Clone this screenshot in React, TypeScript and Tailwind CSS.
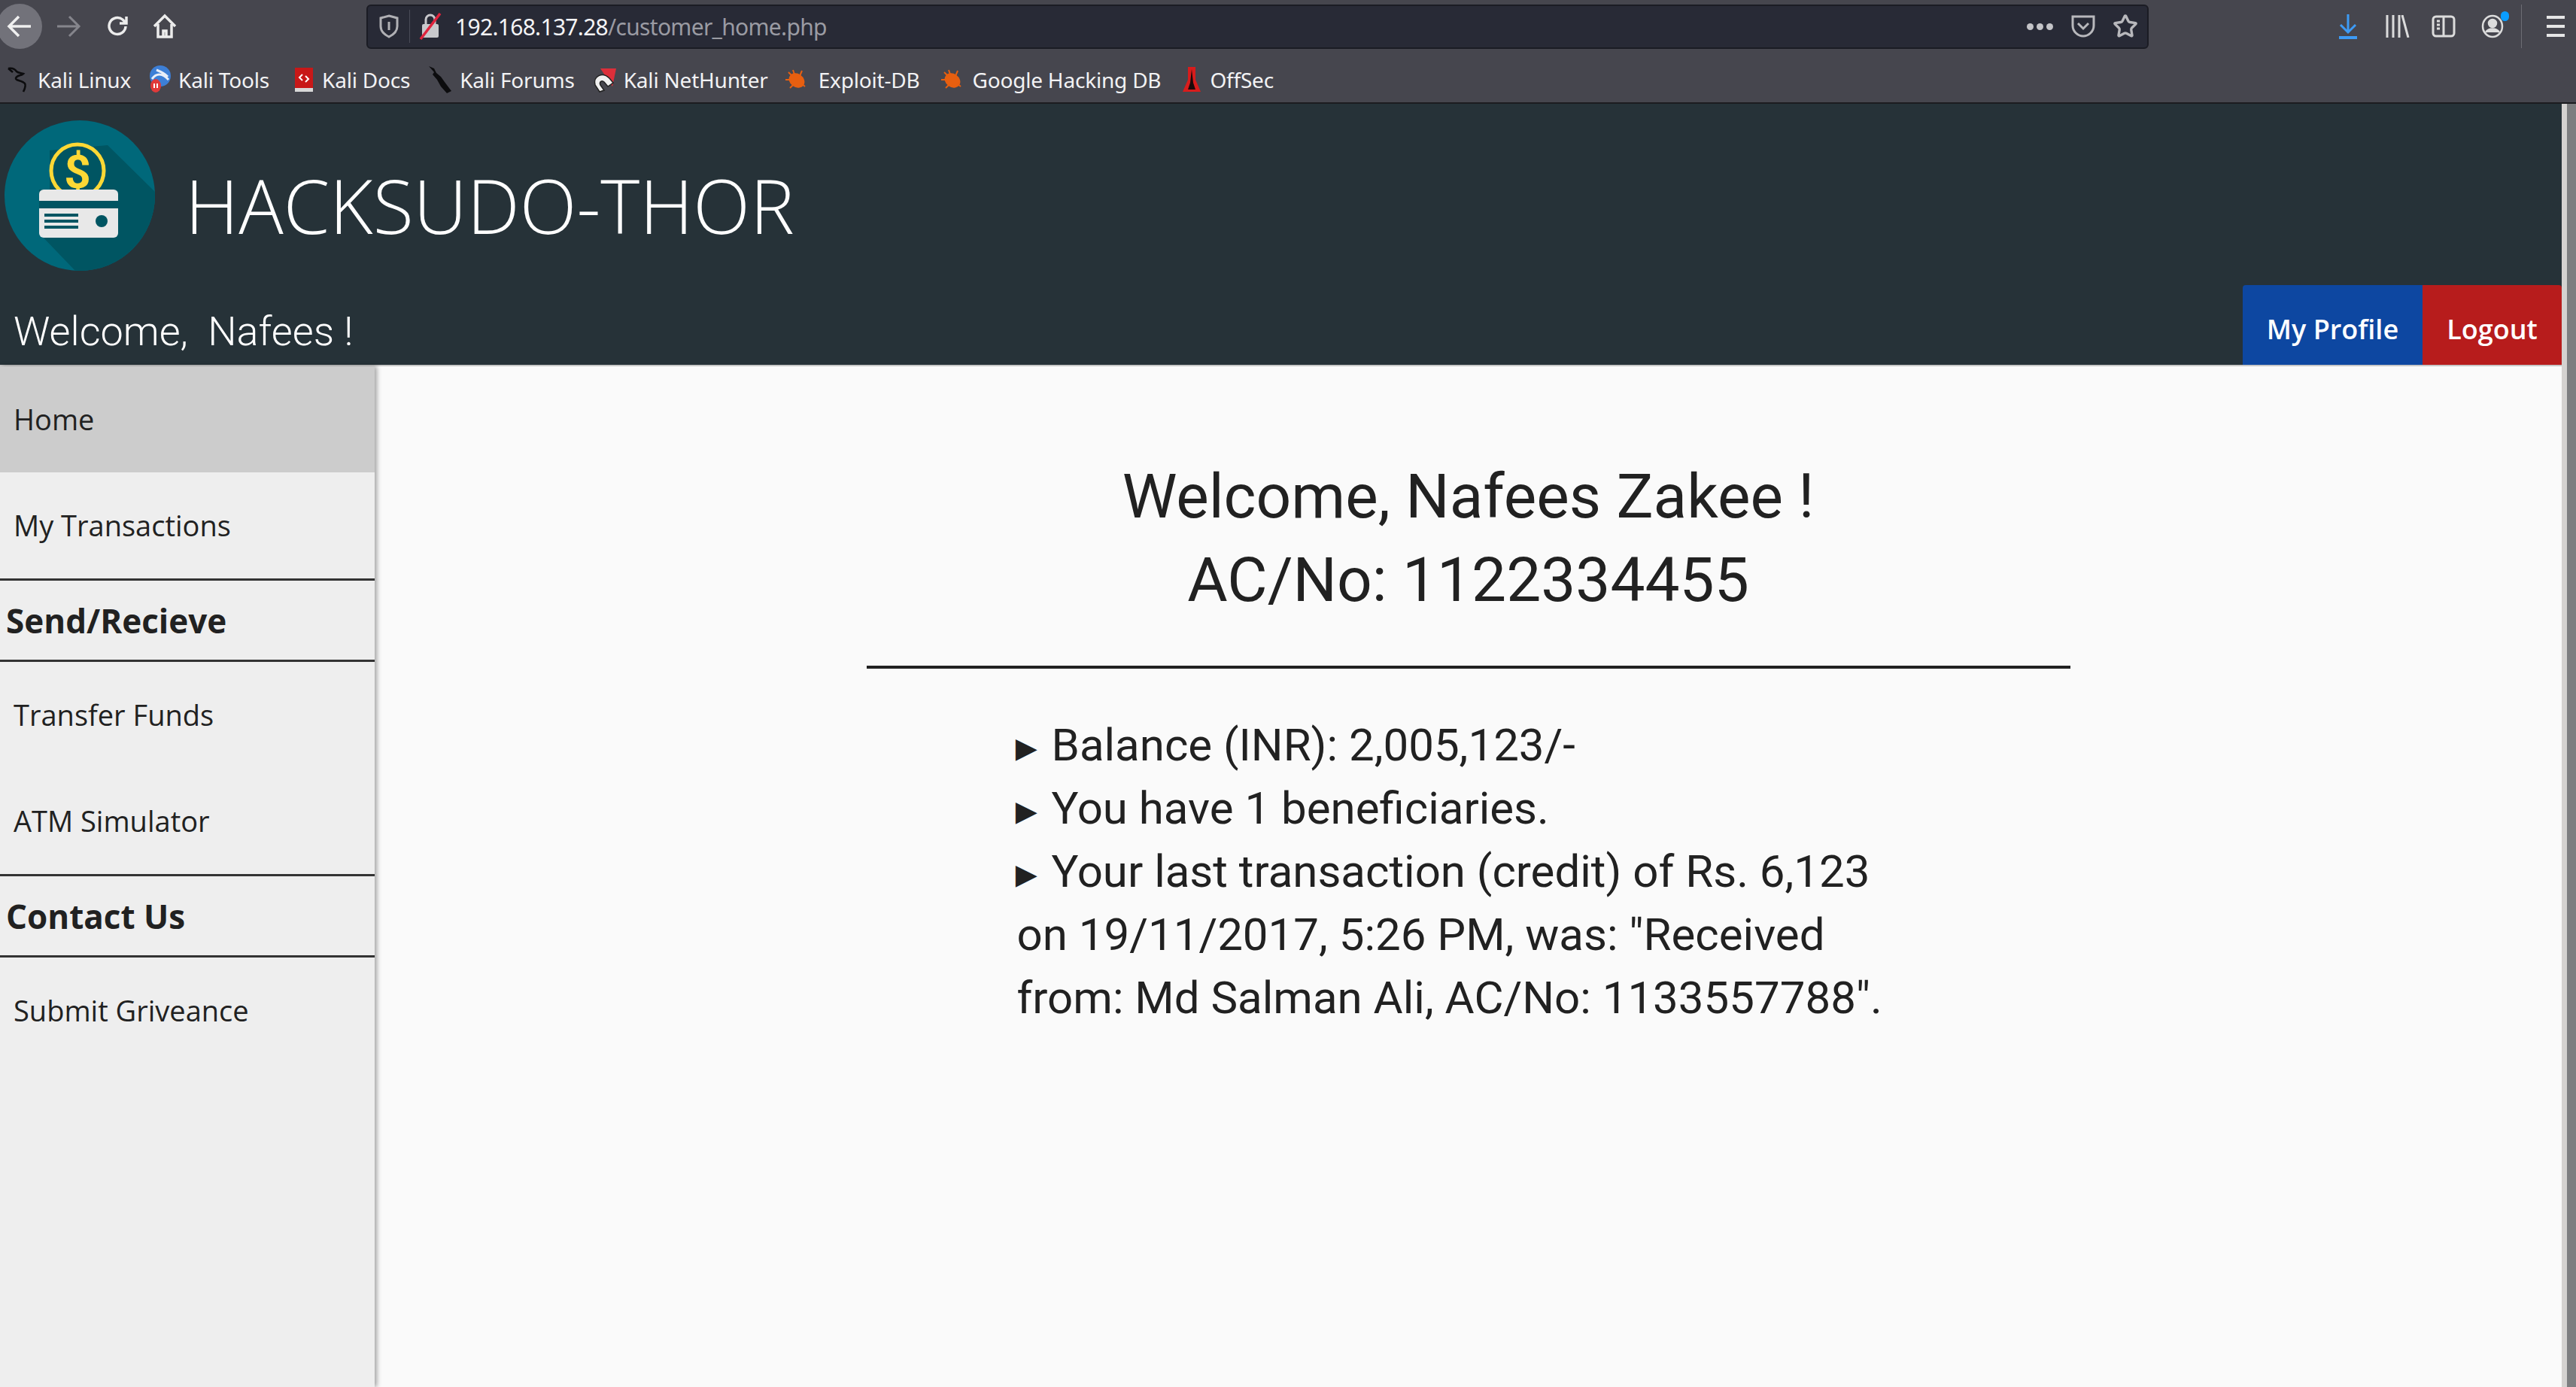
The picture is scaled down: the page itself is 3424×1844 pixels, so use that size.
import { Star } from "lucide-react";

const chromeFont = "font-['Noto_Sans',sans-serif]";

function DragonIcon() {
  return (
    <svg width="30" height="36" viewBox="0 0 30 36" fill="none" stroke="#0c0c0e" strokeWidth="2.6">
      <path d="M1 3c5-1 9 1 11 4 2 2 6 2 9 3-3 3-9 2-10 6-1 3 9 3 12 7 2 3 0 7-2 11" />
      <path d="M1 3l6 5" />
    </svg>
  );
}

function ToolsIcon() {
  return (
    <svg width="30" height="38" viewBox="0 0 30 38">
      <circle cx="15" cy="14" r="14" fill="#3d7fd6" />
      <path d="M4 18c6-8 14-8 22 1M10 6c5 2 10 4 15 9" stroke="#e8eef8" strokeWidth="3" fill="none" />
      <ellipse cx="9" cy="27" rx="7" ry="9" fill="#e03a3a" />
      <path d="M7 24v6M11 24v6" stroke="#fff" strokeWidth="2" />
    </svg>
  );
}

function DocsIcon() {
  return (
    <svg width="26" height="34" viewBox="0 0 26 34">
      <rect x="1" y="1" width="24" height="27" fill="#c81818" />
      <rect x="1" y="28" width="24" height="5" fill="#d8d8d8" />
      <path d="M11 10l-4 4 4 4M15 12l4 4-4 4" stroke="#fff" strokeWidth="2" fill="none" />
    </svg>
  );
}

function ForumsIcon() {
  return (
    <svg width="34" height="38" viewBox="0 0 34 38">
      <path d="M2 1l7 3 3 6 6 5 5 7 9 12-6 3-8-9-5-9-6-7 2-3z" fill="#0c0c0e" />
    </svg>
  );
}

function NetHunterIcon() {
  return (
    <svg width="32" height="34" viewBox="0 0 32 34">
      <path d="M10 2h21l-5 24z" fill="#dc2f3a" />
      <path d="M3 24c-3-12 10-18 19-9l5 6-7 5-5-6c-3-3-7 0-5 4l5 7-6 2z" fill="#f0f0f0" stroke="#222" strokeWidth="1.5" />
    </svg>
  );
}

function BugIcon() {
  return (
    <svg width="32" height="30" viewBox="0 0 32 30" stroke="#e85f10" strokeWidth="2">
      <ellipse cx="17" cy="16" rx="10" ry="8" fill="#e85f10" transform="rotate(35 17 16)" />
      <path d="M6 5l6 6M2 15h7M8 26l5-5M28 24l-5-4M24 3l-3 7M12 2l2 6" fill="none" />
    </svg>
  );
}

function OffSecIcon() {
  return (
    <svg width="26" height="36" viewBox="0 0 26 36">
      <path d="M8 1h10v17l7 16H1l7-16z" fill="#d81c1c" />
      <path d="M13 4l2 18 3 9H8l3-9z" fill="#1a0a0a" />
    </svg>
  );
}

function Bookmark({ icon, label, className }: { icon: React.ReactNode; label: string; className: string }) {
  return (
    <div className={`flex items-center ${className}`}>
      {icon}
      <span className={`text-[28px] tracking-[-0.2px] text-[#f2f2f4] ${chromeFont}`}>{label}</span>
    </div>
  );
}

function Toolbar() {
  return (
    <div className="h-[70px] bg-[#46464e] flex items-center">
      <div className="w-[60px] h-[60px] rounded-full bg-[#72727a] -ml-[4px] flex items-center justify-center shrink-0">
        <svg width="34" height="30" viewBox="0 0 34 30" fill="none" stroke="#f0f0f0" strokeWidth="3.5">
          <path d="M32 15H4M16 2L3 15l13 13" />
        </svg>
      </div>
      <svg className="ml-[18px]" width="34" height="30" viewBox="0 0 34 30" fill="none" stroke="#85858c" strokeWidth="3">
        <path d="M2 15h28M18 2l13 13-13 13" />
      </svg>
      <svg className="ml-[32px]" width="32" height="32" viewBox="0 0 32 32" fill="none" stroke="#ececec" strokeWidth="3.5">
        <path d="M27 16a11 11 0 1 1-4-9l4 4M28 3v9h-9" />
      </svg>
      <svg className="ml-[30px]" width="34" height="34" viewBox="0 0 34 34" fill="none" stroke="#ececec" strokeWidth="3.5">
        <path d="M3 17L17 3l14 14M8 14v17h18V14" />
        <path d="M15 31v-8h4v8" />
      </svg>
      {/* URL bar */}
      <div className="ml-[251px] w-[2369px] h-[59px] rounded-[6px] bg-[#282a36] border-2 border-[#1b1c24] flex items-center shrink-0">
        <svg className="ml-[14px]" width="28" height="32" viewBox="0 0 28 32" fill="none" stroke="#b0b0b4" strokeWidth="3">
          <path d="M14 2l11 3v11c0 7-5 11-11 14C8 27 3 23 3 16V5z" />
          <path d="M14 10v11" />
        </svg>
        <div className="ml-[13px] w-[1px] h-[44px] bg-[#4a4b57]" />
        <svg className="ml-[12px]" width="30" height="36" viewBox="0 0 30 36">
          <rect x="4" y="15" width="22" height="18" rx="2" fill="#c8c8cc" />
          <path d="M9 15V9a6 6 0 0 1 12 0v6" stroke="#c8c8cc" strokeWidth="3" fill="none" />
          <path d="M2 35L28 1" stroke="#e0233d" strokeWidth="3.5" />
        </svg>
        <span className={`ml-[18px] text-[30px] tracking-[-0.7px] text-[#f4f4f6] ${chromeFont}`}>
          192.168.137.28<span className="text-[#9a9ba3]">/customer_home.php</span>
        </span>
        <div className="ml-auto flex items-center">
          <div className="flex gap-[4px]">
            <span className="w-[9px] h-[9px] rounded-full bg-[#c4c4c8]" />
            <span className="w-[9px] h-[9px] rounded-full bg-[#c4c4c8]" />
            <span className="w-[9px] h-[9px] rounded-full bg-[#c4c4c8]" />
          </div>
          <svg className="ml-[23px]" width="34" height="32" viewBox="0 0 34 32" fill="none" stroke="#b8b8bc" strokeWidth="3">
            <path d="M3 3h28v12c0 8-7 14-14 14S3 23 3 15z" />
            <path d="M10 12l7 7 7-7" />
          </svg>
          <Star className="ml-[22px] mr-[12px] text-[#b8b8bc]" size={34} strokeWidth={2.4} />
        </div>
      </div>
      {/* Right toolbar icons */}
      <svg className="ml-[253px]" width="24" height="34" viewBox="0 0 24 34" fill="none" stroke="#3d9bf5" strokeWidth="3">
        <path d="M12 1v24M2 15l10 10 10-10" />
        <path d="M0 32h24" strokeWidth="4" />
      </svg>
      <svg className="ml-[38px]" width="32" height="30" viewBox="0 0 32 30" fill="none" stroke="#dcdcdc" strokeWidth="3">
        <path d="M2 0v30M10 0v30M18 0v30M22 0l8 30" />
      </svg>
      <svg className="ml-[29px]" width="32" height="30" viewBox="0 0 32 30" fill="none" stroke="#dcdcdc" strokeWidth="3">
        <rect x="2" y="2" width="28" height="26" rx="4" />
        <path d="M16 2v26M7 8h4M7 13h4M7 18h4" />
      </svg>
      <div className="ml-[34px] relative">
        <svg width="30" height="32" viewBox="0 0 30 32" fill="none" stroke="#dcdcdc" strokeWidth="2.5">
          <ellipse cx="15" cy="16" rx="13" ry="14" />
          <circle cx="15" cy="12" r="5" fill="#dcdcdc" />
          <path d="M6 24c4-6 14-6 18 0" fill="#dcdcdc" />
        </svg>
        <span className="absolute -top-[4px] -right-[7px] w-[11px] h-[13px] rounded-full bg-[#0a9dff]" />
      </div>
      <div className="ml-[23px] w-[1px] h-[58px] bg-[#6c6c73]" />
      <div className="ml-[33px] flex flex-col gap-[8px]">
        <span className="block w-[24px] h-[4px] bg-[#e6e6e6]" />
        <span className="block w-[24px] h-[4px] bg-[#e6e6e6]" />
        <span className="block w-[24px] h-[4px] bg-[#e6e6e6]" />
      </div>
    </div>
  );
}

function BookmarksBar() {
  return (
    <div className="h-[68px] pt-[6px] bg-[#46464e] border-b-2 border-[#1c1c20] flex items-center">
      <Bookmark className="ml-[10px] gap-[10px]" icon={<DragonIcon />} label="Kali Linux" />
      <Bookmark className="ml-[24px] gap-[9px]" icon={<ToolsIcon />} label="Kali Tools" />
      <Bookmark className="ml-[33px] gap-[11px]" icon={<DocsIcon />} label="Kali Docs" />
      <Bookmark className="ml-[23px] gap-[9px]" icon={<ForumsIcon />} label="Kali Forums" />
      <Bookmark className="ml-[24px] gap-[9px]" icon={<NetHunterIcon />} label="Kali NetHunter" />
      <Bookmark className="ml-[21px] gap-[14px]" icon={<BugIcon />} label="Exploit-DB" />
      <Bookmark className="ml-[27px] gap-[11px]" icon={<BugIcon />} label="Google Hacking DB" />
      <Bookmark className="ml-[28px] gap-[11px]" icon={<OffSecIcon />} label="OffSec" />
    </div>
  );
}

function Logo() {
  return (
    <svg className="shrink-0" width="200" height="200" viewBox="0 0 200 200">
      <defs>
        <clipPath id="logo-clip">
          <circle cx="100" cy="100" r="100" />
        </clipPath>
      </defs>
      <circle cx="100" cy="100" r="100" fill="#00687a" />
      <path d="M137 33L200 95V200H94L46 150V92H60V40z" fill="#005562" clipPath="url(#logo-clip)" />
      <circle cx="97" cy="67" r="35" fill="#005562" stroke="#fdd835" strokeWidth="5" />
      <text x="97" y="90" textAnchor="middle" fontSize="62" fontWeight="700" fill="#fdd835" fontFamily="Roboto, sans-serif">$</text>
      <rect x="46" y="92" width="105" height="64" rx="6" fill="#e8e8e8" />
      <rect x="46" y="107" width="105" height="10" fill="#005562" />
      <rect x="53" y="124" width="45" height="4" fill="#005562" />
      <rect x="53" y="132" width="45" height="4" fill="#005562" />
      <rect x="53" y="140" width="45" height="4" fill="#005562" />
      <circle cx="129" cy="134" r="8" fill="#005562" />
    </svg>
  );
}

function Header() {
  return (
    <header className="h-[347px] bg-[#263238] flex flex-col relative">
      <div className="pt-[22px] pl-[6px] flex items-start h-[250px]">
        <Logo />
        <h1 className="ml-[40px] mt-[6px] self-center text-[99px] font-light text-white font-['Open_Sans',sans-serif] leading-none">
          HACKSUDO-THOR
        </h1>
      </div>
      <div className="flex items-end justify-between flex-1">
        <p className="ml-[18px] mb-[17px] text-[54px] leading-none font-light text-white font-['Roboto',sans-serif]">
          Welcome,&nbsp; Nafees !
        </p>
        <nav className="flex h-[106px] pt-0 font-['Open_Sans',sans-serif] font-semibold text-[36px] text-white">
          <a className="w-[239px] pt-[12px] bg-[#0d47a1] rounded-tl-[4px] flex items-center justify-center">My Profile</a>
          <a className="w-[185px] pt-[12px] bg-[#b71c1c] rounded-tr-[4px] flex items-center justify-center">Logout</a>
        </nav>
      </div>
    </header>
  );
}

function NavItem({ label, active }: { label: string; active?: boolean }) {
  return (
    <a className={`h-[141px] pl-[18px] flex items-center text-[38px] text-[#212121] ${active ? "bg-[#cccccc]" : ""}`}>
      {label}
    </a>
  );
}

function NavHeading({ label }: { label: string }) {
  return (
    <div className="h-[111px] pl-[8px] flex items-center border-y-[3px] border-[#333333] text-[44px] font-bold text-[#212121]">
      {label}
    </div>
  );
}

function Sidebar() {
  return (
    <aside className="relative z-10 w-[498px] shrink-0 bg-[#eeeeee] shadow-[3px_0_6px_rgba(0,0,0,0.35)] flex flex-col font-['Open_Sans',sans-serif]">
      <NavItem label="Home" active />
      <NavItem label="My Transactions" />
      <NavHeading label="Send/Recieve" />
      <NavItem label="Transfer Funds" />
      <NavItem label="ATM Simulator" />
      <NavHeading label="Contact Us" />
      <NavItem label="Submit Griveance" />
    </aside>
  );
}

function Bullet() {
  return <span className="inline-block w-[57px] -ml-[11px] text-[48px] leading-none">►</span>;
}

function Main() {
  return (
    <main className="flex-1 bg-[#fafafa] font-['Roboto',sans-serif] text-[#212121] flex flex-col items-center pt-[118px]">
      <h2 className="text-[82px] leading-[111px] text-center">
        Welcome, Nafees Zakee !
        <br />
        AC/No: 1122334455
      </h2>
      <hr className="w-[1600px] mt-[58px] border-t-[4px] border-[#212121]" />
      <div className="w-[1162px] mt-[60px] -ml-[38px] text-[60px] leading-[84px]">
        <p><Bullet />Balance (INR): 2,005,123/-</p>
        <p><Bullet />You have 1 beneficiaries.</p>
        <p><Bullet />Your last transaction (credit) of Rs. 6,123 on 19/11/2017, 5:26 PM, was: "Received from: Md Salman Ali, AC/No: 1133557788".</p>
      </div>
    </main>
  );
}

export default function App() {
  return (
    <div className="w-[3424px] h-[1844px] overflow-hidden flex flex-col bg-[#fafafa]">
      <Toolbar />
      <BookmarksBar />
      <div className="flex flex-1 min-h-0">
        <div className="flex-1 flex flex-col min-w-0">
          <Header />
          <div className="flex flex-1 min-h-0 border-t-2 border-[#c8c8c8]">
            <Sidebar />
            <Main />
          </div>
        </div>
        {/* Scrollbar */}
        <div className="w-[19px] shrink-0 bg-[#d4d2d0] pl-[7px]">
          <div className="h-full bg-[#7d7e80]" />
        </div>
      </div>
    </div>
  );
}
